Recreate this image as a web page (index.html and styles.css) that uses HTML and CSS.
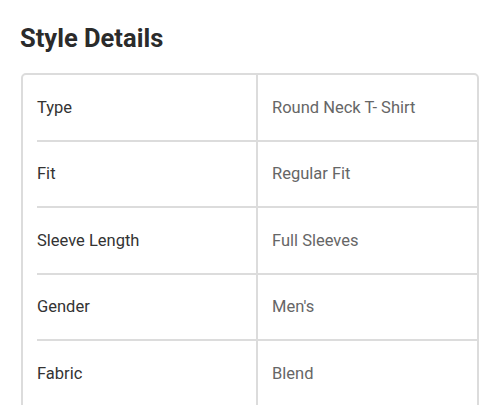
FILE: index.html
```html
<!DOCTYPE html>
<html>
<head>
<meta charset="utf-8">
<link rel="stylesheet" href="styles.css">
</head>
<body>
<section class="details">
  <h2 class="title">Style Details</h2>
  <div class="spec">
    <div class="row"><div class="key">Type</div><div class="val">Round Neck T- Shirt</div></div>
    <div class="row"><div class="key">Fit</div><div class="val">Regular Fit</div></div>
    <div class="row"><div class="key">Sleeve Length</div><div class="val">Full Sleeves</div></div>
    <div class="row"><div class="key">Gender</div><div class="val">Men's</div></div>
    <div class="row"><div class="key">Fabric</div><div class="val">Blend</div></div>
  </div>
</section>
</body>
</html>
```
FILE: styles.css
```css
html, body {
  margin: 0;
  padding: 0;
  background: #ffffff;
}
body {
  font-family: Roboto, "Liberation Sans", sans-serif;
}
.details {
  padding: 23px 21px 0 21px;
}
.title {
  margin: 0 0 20px -1px;
  font-size: 25.5px;
  line-height: 30px;
  font-weight: 700;
  color: #2b2b2b;
}
.spec {
  border: 2px solid #dcdcdc;
  border-radius: 5px;
  display: flex;
  flex-direction: column;
}
.row {
  display: flex;
  height: 66.5px;
}
.key {
  width: 219px;
  margin-left: 14px;
  border-bottom: 2px solid #dcdcdc;
  display: flex;
  align-items: center;
  font-size: 16.5px;
  color: #333333;
}
.val {
  flex: 1;
  border-left: 2px solid #dcdcdc;
  border-bottom: 2px solid #dcdcdc;
  padding-left: 14px;
  display: flex;
  align-items: center;
  font-size: 16.5px;
  color: #666666;
}
```
